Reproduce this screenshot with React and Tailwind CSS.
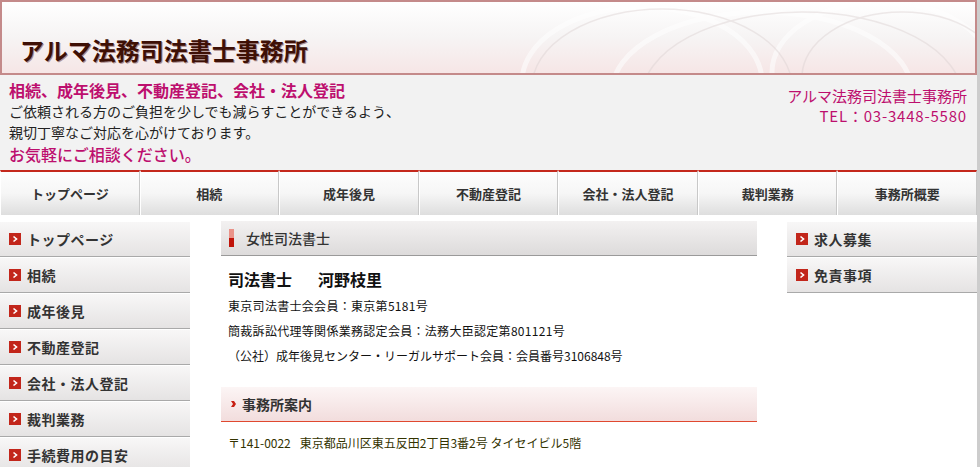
import React from "react";

const jp = { fontFamily: '"Noto Sans CJK JP", "Noto Sans", sans-serif' };

function RedBox() {
  return (
    <svg width="12" height="12" viewBox="0 0 12 12" className="shrink-0">
      <rect width="12" height="12" fill="#c2261b" />
      <polyline points="4.5,3.5 7.5,6 4.5,8.5" fill="none" stroke="#fff" strokeWidth="1.6" />
    </svg>
  );
}

function SideItem({ label }) {
  return (
    <div className="h-[36px] flex items-center gap-[6px] pl-[9px] bg-gradient-to-b from-[#f8f7f7] to-[#e5e3e3] border-t border-t-white border-b border-b-[#a9a9a9] text-[14px] font-bold text-[#333] tracking-[0.5px]">
      <RedBox />
      <span className="leading-none">{label}</span>
    </div>
  );
}

export default function App() {
  const nav = ["トップページ", "相続", "成年後見", "不動産登記", "会社・法人登記", "裁判業務", "事務所概要"];
  const left = ["トップページ", "相続", "成年後見", "不動産登記", "会社・法人登記", "裁判業務", "手続費用の目安"];
  return (
    <div className="min-h-[467px] bg-[#cdcdcd] overflow-hidden" style={jp}>
      <div className="w-[977px] bg-white min-h-[467px]">
        {/* banner */}
        <div className="relative h-[75px] border-[2px] border-[#c48a8a] bg-gradient-to-b from-white via-[#f6f4f4] to-[#f6e6e6] overflow-hidden">
          <svg className="absolute inset-0" width="973" height="71" viewBox="0 0 973 71">
            <g fill="none" stroke="#ffffff" strokeWidth="5" opacity="0.55">
              <ellipse cx="640" cy="80" rx="120" ry="75" />
              <ellipse cx="760" cy="90" rx="150" ry="80" />
              <ellipse cx="880" cy="70" rx="110" ry="70" />
            </g>
            <g fill="none" stroke="#dcd2d2" strokeWidth="1.5" opacity="0.45">
              <ellipse cx="660" cy="85" rx="130" ry="78" />
              <ellipse cx="800" cy="95" rx="160" ry="85" />
              <ellipse cx="900" cy="75" rx="100" ry="65" />
            </g>
          </svg>
          <div
            className="absolute left-[18px] top-[36px] text-[24px] font-bold text-[#3e1006] leading-none"
            style={{ textShadow: "1px 1px 0 #b09090" }}
          >
            アルマ法務司法書士事務所
          </div>
        </div>
        {/* band */}
        <div className="h-[95px] bg-[#f2f2f2] flex justify-between pl-[9px] pr-[10px]">
          <div className="pt-[4px]">
            <div className="text-[16px] font-bold text-[#bd0f6e] leading-[22px]">相続、成年後見、不動産登記、会社・法人登記</div>
            <div className="text-[14px] text-[#222] leading-[21px]">ご依頼される方のご負担を少しでも減らすことができるよう、</div>
            <div className="text-[14px] text-[#222] leading-[21px]">親切丁寧なご対応を心がけております。</div>
            <div className="text-[16px] font-medium text-[#bd0f6e] leading-[22px]">お気軽にご相談ください。</div>
          </div>
          <div className="pt-[11px] text-right text-[#bd0f6e]">
            <div className="text-[15px] leading-[20px]">アルマ法務司法書士事務所</div>
            <div className="text-[15px] leading-[20px] tracking-[0.8px]">TEL：03-3448-5580</div>
          </div>
        </div>
        {/* nav */}
        <div className="grid grid-cols-7 h-[45px] bg-[#e2e2e2]">
          {nav.map((n) => (
            <div
              key={n}
              className="flex items-center justify-center border-t-[2px] border-t-[#c4281c] border-l border-l-white border-r border-r-[#c8c8c8] bg-gradient-to-b from-[#fdfdfd] via-[#f6f6f6] to-[#dedede] text-[13px] font-bold text-[#333]"
            >
              {n}
            </div>
          ))}
        </div>
        {/* content */}
        <div className="flex pt-[6px]">
          <div className="w-[190px] shrink-0">
            {left.map((l) => (
              <SideItem key={l} label={l} />
            ))}
          </div>
          <div className="w-[536px] ml-[31px] shrink-0">
            <div className="h-[35px] flex items-center gap-[12px] pl-[8px] bg-gradient-to-b from-[#f3f1f1] to-[#dddbdb] border-b border-b-[#9a9a9a]">
              <div className="w-[5px] h-[18px] flex flex-col">
                <div className="h-[9px] bg-[#ea9389]" />
                <div className="h-[9px] bg-[#c0140a]" />
              </div>
              <span className="text-[14px] text-[#333] font-medium">女性司法書士</span>
            </div>
            <div className="pl-[7px] pt-[10px]">
              <div className="text-[16px] font-bold text-[#111] leading-[26px]">
                司法書士<span className="inline-block w-[26px]" />河野枝里
              </div>
              <div className="text-[12px] text-[#111] leading-[25px] mt-[1px] tracking-[0.3px]">東京司法書士会会員：東京第5181号</div>
              <div className="text-[12px] text-[#111] leading-[25px] tracking-[0.3px]">簡裁訴訟代理等関係業務認定会員：法務大臣認定第801121号</div>
              <div className="text-[12px] text-[#111] leading-[25px]">（公社）成年後見センター・リーガルサポート会員：会員番号3106848号</div>
            </div>
            <div className="mt-[19px] h-[35px] flex items-center gap-[6px] pl-[10px] bg-gradient-to-b from-[#fcf5f5] to-[#f2dddd] border-b border-b-[#e0482f]">
              <svg width="5" height="6" viewBox="0 0 5 6">
                <polygon points="0,0 3,0 5,3 3,6 0,6 2,3" fill="#c81e12" />
              </svg>
              <span className="text-[14px] font-bold text-[#333]">事務所案内</span>
            </div>
            <div className="pl-[7px] pt-[11px] text-[12px] text-[#333300] leading-[20px]">
              〒141-0022<span className="inline-block w-[9px]" />東京都品川区東五反田2丁目3番2号 タイセイビル5階
            </div>
          </div>
          <div className="w-[190px] ml-[30px] shrink-0">
            <SideItem label="求人募集" />
            <SideItem label="免責事項" />
          </div>
        </div>
      </div>
    </div>
  );
}
